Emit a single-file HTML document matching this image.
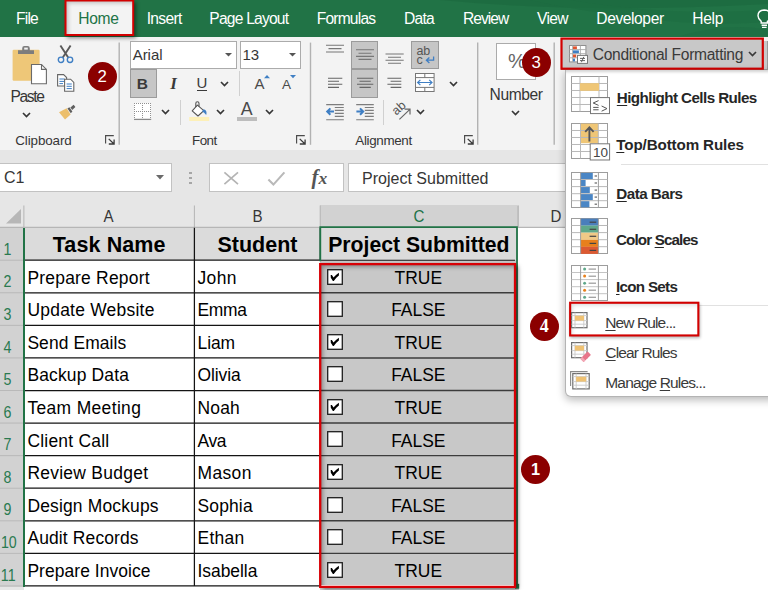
<!DOCTYPE html>
<html><head><meta charset="utf-8"><title>Excel Conditional Formatting</title>
<style>
html,body{margin:0;padding:0;}
body{width:768px;height:590px;position:relative;overflow:hidden;background:#fff;font-family:"Liberation Sans",sans-serif;}
.a{position:absolute;box-sizing:border-box;}
.t{position:absolute;white-space:nowrap;line-height:1;}
.t u{text-decoration-thickness:1.2px;text-underline-offset:2px;}
svg{overflow:visible;}
</style></head><body>
<div class="a " style="left:0.00px;top:0.00px;width:768.00px;height:36.60px;background:#217346;"></div>
<div class="a " style="left:0.00px;top:36.50px;width:768.00px;height:113.70px;background:#f3f3f3;"></div>
<div class="a " style="left:0.00px;top:150.20px;width:768.00px;height:55.00px;background:#e6e6e6;"></div>
<svg class="a" style="left:380px;top:0" width="388" height="36" viewBox="0 0 388 36"><path d="M60 0 Q200 14 388 4 V0 Z" fill="#1d6a40" opacity=".8"/><path d="M150 0 Q290 30 388 22 V10 Q280 16 190 0 Z" fill="#1e6d42" opacity=".7"/><path d="M300 36 Q350 22 388 30 V36 Z" fill="#1e6d42" opacity=".6"/></svg>
<svg class="a" style="left:757.00px;top:9.00px" width="14" height="20" viewBox="0 0 14 20"><path d="M4.2 14 V12.4 Q1 9.8 1 6.8 Q1 1.2 7.4 1 Q13.6 1.2 13.6 6.8 Q13.6 9.8 10.4 12.4 V14 Z M4.6 16.2 H10 M5 18.4 H9.6" fill="none" stroke="#fff" stroke-width="1.4"/></svg>
<div class="a " style="left:65.00px;top:0.00px;width:69.00px;height:36.00px;background:#f3f3f3;box-shadow:2px 2px 4px rgba(0,0,0,.45), inset 3px 3px 4px rgba(0,0,0,.22);"></div>
<svg class="a" style="left:0;top:0" width="768" height="40" fill="none"><rect x="65.5" y="0.5" width="67.7" height="34.5" stroke="#d20000" stroke-width="2"/></svg>
<span class="t" style="left:16.00px;top:10.60px;font-size:15.60px;color:#fff;letter-spacing:-0.784px;">File</span>
<span class="t" style="left:146.70px;top:10.60px;font-size:15.60px;color:#fff;letter-spacing:-0.669px;">Insert</span>
<span class="t" style="left:209.30px;top:10.60px;font-size:15.60px;color:#fff;letter-spacing:-0.782px;">Page Layout</span>
<span class="t" style="left:316.70px;top:10.60px;font-size:15.60px;color:#fff;letter-spacing:-0.802px;">Formulas</span>
<span class="t" style="left:404.00px;top:10.60px;font-size:15.60px;color:#fff;letter-spacing:-0.738px;">Data</span>
<span class="t" style="left:463.00px;top:10.60px;font-size:15.60px;color:#fff;letter-spacing:-0.975px;">Review</span>
<span class="t" style="left:537.00px;top:10.60px;font-size:15.60px;color:#fff;letter-spacing:-0.633px;">View</span>
<span class="t" style="left:596.30px;top:10.60px;font-size:15.60px;color:#fff;letter-spacing:-0.412px;">Developer</span>
<span class="t" style="left:692.30px;top:10.60px;font-size:15.60px;color:#fff;letter-spacing:-0.346px;">Help</span>
<span class="t" style="left:78.30px;top:10.50px;font-size:15.60px;color:#217346;letter-spacing:-0.304px;">Home</span>
<div class="a " style="left:0.00px;top:205.00px;width:768.00px;height:22.50px;background:#e6e6e6;"></div>
<div class="a " style="left:320.30px;top:205.00px;width:196.30px;height:22.50px;background:#d2d2d2;"></div>
<div class="a " style="left:0.00px;top:227.50px;width:24.00px;height:362.50px;background:#d2d2d2;"></div>
<div class="a " style="left:0.00px;top:586.95px;width:24.00px;height:10.00px;background:#e6e6e6;"></div>
<div class="a " style="left:24.00px;top:227.50px;width:296.30px;height:32.70px;background:#dbdbdb;"></div>
<div class="a " style="left:320.30px;top:227.50px;width:197.70px;height:32.70px;background:#dbdbdb;"></div>
<div class="a " style="left:320.30px;top:260.20px;width:197.70px;height:324.40px;background:#c8c8c8;"></div>
<div class="a " style="left:320.30px;top:588.00px;width:198.70px;height:2.00px;background:#d0d0d0;"></div>
<svg class="a" style="left:0;top:0" width="768" height="590" fill="none"><path d="M23.90 205.50 V227.00" stroke="#b4b4b4" stroke-width="1"/><path d="M194.40 205.50 V227.00" stroke="#b4b4b4" stroke-width="1"/><path d="M320.20 205.50 V227.00" stroke="#b4b4b4" stroke-width="1"/><path d="M517.90 205.50 V227.00" stroke="#b4b4b4" stroke-width="1"/><path d="M0.00 227.30 H320.30" stroke="#ababab" stroke-width="1"/><path d="M518.00 227.30 H768.00" stroke="#ababab" stroke-width="1"/><path d="M518.20 205.50 V227.00" stroke="#b4b4b4" stroke-width="1"/><path d="M0.00 260.20 H23.00" stroke="#b9b9b9" stroke-width="1"/><path d="M0.00 292.77 H23.00" stroke="#b9b9b9" stroke-width="1"/><path d="M0.00 325.35 H23.00" stroke="#b9b9b9" stroke-width="1"/><path d="M0.00 357.93 H23.00" stroke="#b9b9b9" stroke-width="1"/><path d="M0.00 390.50 H23.00" stroke="#b9b9b9" stroke-width="1"/><path d="M0.00 423.07 H23.00" stroke="#b9b9b9" stroke-width="1"/><path d="M0.00 455.65 H23.00" stroke="#b9b9b9" stroke-width="1"/><path d="M0.00 488.23 H23.00" stroke="#b9b9b9" stroke-width="1"/><path d="M0.00 520.80 H23.00" stroke="#b9b9b9" stroke-width="1"/><path d="M0.00 553.38 H23.00" stroke="#b9b9b9" stroke-width="1"/><path d="M0.00 585.95 H23.00" stroke="#b9b9b9" stroke-width="1"/><path d="M24.00 260.20 H320.30" stroke="#141414" stroke-width="1.25"/><path d="M320.30 260.20 H515.00" stroke="#1a1a1a" stroke-width="1.1"/><path d="M24.00 292.77 H320.30" stroke="#141414" stroke-width="1.25"/><path d="M320.30 292.77 H515.00" stroke="#3c3c3c" stroke-width="1.4"/><path d="M24.00 325.35 H320.30" stroke="#141414" stroke-width="1.25"/><path d="M320.30 325.35 H515.00" stroke="#3c3c3c" stroke-width="1.4"/><path d="M24.00 357.93 H320.30" stroke="#141414" stroke-width="1.25"/><path d="M320.30 357.93 H515.00" stroke="#3c3c3c" stroke-width="1.4"/><path d="M24.00 390.50 H320.30" stroke="#141414" stroke-width="1.25"/><path d="M320.30 390.50 H515.00" stroke="#3c3c3c" stroke-width="1.4"/><path d="M24.00 423.07 H320.30" stroke="#141414" stroke-width="1.25"/><path d="M320.30 423.07 H515.00" stroke="#3c3c3c" stroke-width="1.4"/><path d="M24.00 455.65 H320.30" stroke="#141414" stroke-width="1.25"/><path d="M320.30 455.65 H515.00" stroke="#3c3c3c" stroke-width="1.4"/><path d="M24.00 488.23 H320.30" stroke="#141414" stroke-width="1.25"/><path d="M320.30 488.23 H515.00" stroke="#3c3c3c" stroke-width="1.4"/><path d="M24.00 520.80 H320.30" stroke="#141414" stroke-width="1.25"/><path d="M320.30 520.80 H515.00" stroke="#3c3c3c" stroke-width="1.4"/><path d="M24.00 553.38 H320.30" stroke="#141414" stroke-width="1.25"/><path d="M320.30 553.38 H515.00" stroke="#3c3c3c" stroke-width="1.4"/><path d="M24.00 585.95 H320.30" stroke="#141414" stroke-width="1.25"/><path d="M194.40 227.80 V585.95" stroke="#141414" stroke-width="1.25"/><path d="M320.30 227.80 V260.20" stroke="#141414" stroke-width="1.25"/></svg>
<svg class="a" style="left:6.00px;top:209.00px" width="16" height="15" viewBox="0 0 16 15"><path d="M15 0 L15 14.5 L0 14.5 Z" fill="#b7b7b7"/></svg>
<span class="t" style="left:103.40px;top:209.30px;font-size:16.80px;color:#363636;transform:scaleX(.9);transform-origin:50% 50%;">A</span>
<span class="t" style="left:251.90px;top:209.30px;font-size:16.80px;color:#363636;transform:scaleX(.9);transform-origin:50% 50%;">B</span>
<span class="t" style="left:412.93px;top:209.30px;font-size:16.80px;color:#217346;transform:scaleX(.9);transform-origin:50% 50%;">C</span>
<span class="t" style="left:549.93px;top:209.30px;font-size:16.80px;color:#363636;transform:scaleX(.9);transform-origin:50% 50%;">D</span>
<div class="a " style="left:22.90px;top:227.50px;width:1.80px;height:359.45px;background:#217346;"></div>
<span class="t" style="left:3.01px;top:241.82px;font-size:15.80px;color:#2a7a50;transform:scaleX(.9);transform-origin:50% 50%;">1</span>
<span class="t" style="left:3.01px;top:274.40px;font-size:15.80px;color:#2a7a50;transform:scaleX(.9);transform-origin:50% 50%;">2</span>
<span class="t" style="left:3.01px;top:306.97px;font-size:15.80px;color:#2a7a50;transform:scaleX(.9);transform-origin:50% 50%;">3</span>
<span class="t" style="left:3.01px;top:339.55px;font-size:15.80px;color:#2a7a50;transform:scaleX(.9);transform-origin:50% 50%;">4</span>
<span class="t" style="left:3.01px;top:372.12px;font-size:15.80px;color:#2a7a50;transform:scaleX(.9);transform-origin:50% 50%;">5</span>
<span class="t" style="left:3.01px;top:404.70px;font-size:15.80px;color:#2a7a50;transform:scaleX(.9);transform-origin:50% 50%;">6</span>
<span class="t" style="left:3.01px;top:437.27px;font-size:15.80px;color:#2a7a50;transform:scaleX(.9);transform-origin:50% 50%;">7</span>
<span class="t" style="left:3.01px;top:469.85px;font-size:15.80px;color:#2a7a50;transform:scaleX(.9);transform-origin:50% 50%;">8</span>
<span class="t" style="left:3.01px;top:502.43px;font-size:15.80px;color:#2a7a50;transform:scaleX(.9);transform-origin:50% 50%;">9</span>
<span class="t" style="left:-0.39px;top:535.00px;font-size:15.80px;color:#2a7a50;transform:scaleX(.9);transform-origin:50% 50%;">10</span>
<span class="t" style="left:0.20px;top:567.58px;font-size:15.80px;color:#2a7a50;transform:scaleX(.9);transform-origin:50% 50%;">11</span>
<span class="t" style="left:52.70px;top:235.20px;font-size:21.50px;color:#000;letter-spacing:0.117px;font-weight:bold;">Task Name</span>
<span class="t" style="left:217.49px;top:235.20px;font-size:21.50px;color:#000;font-weight:bold;">Student</span>
<span class="t" style="left:328.20px;top:234.10px;font-size:21.20px;color:#000;font-weight:bold;">Project Submitted</span>
<span class="t" style="left:27.40px;top:269.70px;font-size:17.45px;color:#000;letter-spacing:0.230px;">Prepare Report</span>
<span class="t" style="left:197.50px;top:269.70px;font-size:17.45px;color:#000;letter-spacing:0.400px;">John</span>
<span class="t" style="left:394.55px;top:269.70px;font-size:17.45px;color:#000;">TRUE</span>
<svg class="a" style="left:327.00px;top:268.50px" width="16" height="16" viewBox="0 0 16 16"><rect x="0.7" y="0.7" width="14.6" height="14.6" fill="#fff" stroke="#1e1e1e" stroke-width="1.3"/><path d="M3.7 6 L4.9 5.9 L6.5 8.6 Q9 5.6 11.9 3.7 L11.9 6.6 Q9 8.8 6.8 12 L5.9 12 L3.8 8.8 Z" fill="#000"/></svg>
<span class="t" style="left:27.40px;top:302.27px;font-size:17.45px;color:#000;letter-spacing:0.250px;">Update Website</span>
<span class="t" style="left:197.50px;top:302.27px;font-size:17.45px;color:#000;letter-spacing:-0.270px;">Emma</span>
<span class="t" style="left:391.14px;top:302.27px;font-size:17.45px;color:#000;">FALSE</span>
<svg class="a" style="left:327.00px;top:301.07px" width="16" height="16" viewBox="0 0 16 16"><rect x="0.7" y="0.7" width="14.6" height="14.6" fill="#fff" stroke="#1e1e1e" stroke-width="1.3"/></svg>
<span class="t" style="left:27.40px;top:334.85px;font-size:17.45px;color:#000;letter-spacing:0.100px;">Send Emails</span>
<span class="t" style="left:197.50px;top:334.85px;font-size:17.45px;color:#000;letter-spacing:-0.070px;">Liam</span>
<span class="t" style="left:394.55px;top:334.85px;font-size:17.45px;color:#000;">TRUE</span>
<svg class="a" style="left:327.00px;top:333.65px" width="16" height="16" viewBox="0 0 16 16"><rect x="0.7" y="0.7" width="14.6" height="14.6" fill="#fff" stroke="#1e1e1e" stroke-width="1.3"/><path d="M3.7 6 L4.9 5.9 L6.5 8.6 Q9 5.6 11.9 3.7 L11.9 6.6 Q9 8.8 6.8 12 L5.9 12 L3.8 8.8 Z" fill="#000"/></svg>
<span class="t" style="left:27.40px;top:367.43px;font-size:17.45px;color:#000;letter-spacing:0.170px;">Backup Data</span>
<span class="t" style="left:197.50px;top:367.43px;font-size:17.45px;color:#000;letter-spacing:-0.100px;">Olivia</span>
<span class="t" style="left:391.14px;top:367.43px;font-size:17.45px;color:#000;">FALSE</span>
<svg class="a" style="left:327.00px;top:366.23px" width="16" height="16" viewBox="0 0 16 16"><rect x="0.7" y="0.7" width="14.6" height="14.6" fill="#fff" stroke="#1e1e1e" stroke-width="1.3"/></svg>
<span class="t" style="left:27.40px;top:400.00px;font-size:17.45px;color:#000;letter-spacing:0.360px;">Team Meeting</span>
<span class="t" style="left:197.50px;top:400.00px;font-size:17.45px;color:#000;letter-spacing:0.170px;">Noah</span>
<span class="t" style="left:394.55px;top:400.00px;font-size:17.45px;color:#000;">TRUE</span>
<svg class="a" style="left:327.00px;top:398.80px" width="16" height="16" viewBox="0 0 16 16"><rect x="0.7" y="0.7" width="14.6" height="14.6" fill="#fff" stroke="#1e1e1e" stroke-width="1.3"/><path d="M3.7 6 L4.9 5.9 L6.5 8.6 Q9 5.6 11.9 3.7 L11.9 6.6 Q9 8.8 6.8 12 L5.9 12 L3.8 8.8 Z" fill="#000"/></svg>
<span class="t" style="left:27.40px;top:432.57px;font-size:17.45px;color:#000;letter-spacing:0.230px;">Client Call</span>
<span class="t" style="left:197.50px;top:432.57px;font-size:17.45px;color:#000;letter-spacing:-0.400px;">Ava</span>
<span class="t" style="left:391.14px;top:432.57px;font-size:17.45px;color:#000;">FALSE</span>
<svg class="a" style="left:327.00px;top:431.38px" width="16" height="16" viewBox="0 0 16 16"><rect x="0.7" y="0.7" width="14.6" height="14.6" fill="#fff" stroke="#1e1e1e" stroke-width="1.3"/></svg>
<span class="t" style="left:27.40px;top:465.15px;font-size:17.45px;color:#000;letter-spacing:0.275px;">Review Budget</span>
<span class="t" style="left:197.50px;top:465.15px;font-size:17.45px;color:#000;letter-spacing:0.375px;">Mason</span>
<span class="t" style="left:394.55px;top:465.15px;font-size:17.45px;color:#000;">TRUE</span>
<svg class="a" style="left:327.00px;top:463.95px" width="16" height="16" viewBox="0 0 16 16"><rect x="0.7" y="0.7" width="14.6" height="14.6" fill="#fff" stroke="#1e1e1e" stroke-width="1.3"/><path d="M3.7 6 L4.9 5.9 L6.5 8.6 Q9 5.6 11.9 3.7 L11.9 6.6 Q9 8.8 6.8 12 L5.9 12 L3.8 8.8 Z" fill="#000"/></svg>
<span class="t" style="left:27.40px;top:497.73px;font-size:17.45px;color:#000;letter-spacing:0.177px;">Design Mockups</span>
<span class="t" style="left:197.50px;top:497.73px;font-size:17.45px;color:#000;letter-spacing:0.160px;">Sophia</span>
<span class="t" style="left:391.14px;top:497.73px;font-size:17.45px;color:#000;">FALSE</span>
<svg class="a" style="left:327.00px;top:496.53px" width="16" height="16" viewBox="0 0 16 16"><rect x="0.7" y="0.7" width="14.6" height="14.6" fill="#fff" stroke="#1e1e1e" stroke-width="1.3"/></svg>
<span class="t" style="left:27.40px;top:530.30px;font-size:17.45px;color:#000;letter-spacing:0.140px;">Audit Records</span>
<span class="t" style="left:197.50px;top:530.30px;font-size:17.45px;color:#000;letter-spacing:0.300px;">Ethan</span>
<span class="t" style="left:391.14px;top:530.30px;font-size:17.45px;color:#000;">FALSE</span>
<svg class="a" style="left:327.00px;top:529.10px" width="16" height="16" viewBox="0 0 16 16"><rect x="0.7" y="0.7" width="14.6" height="14.6" fill="#fff" stroke="#1e1e1e" stroke-width="1.3"/></svg>
<span class="t" style="left:27.40px;top:562.88px;font-size:17.45px;color:#000;letter-spacing:0.070px;">Prepare Invoice</span>
<span class="t" style="left:197.50px;top:562.88px;font-size:17.45px;color:#000;letter-spacing:-0.030px;">Isabella</span>
<span class="t" style="left:394.55px;top:562.88px;font-size:17.45px;color:#000;">TRUE</span>
<svg class="a" style="left:327.00px;top:561.67px" width="16" height="16" viewBox="0 0 16 16"><rect x="0.7" y="0.7" width="14.6" height="14.6" fill="#fff" stroke="#1e1e1e" stroke-width="1.3"/><path d="M3.7 6 L4.9 5.9 L6.5 8.6 Q9 5.6 11.9 3.7 L11.9 6.6 Q9 8.8 6.8 12 L5.9 12 L3.8 8.8 Z" fill="#000"/></svg>
<svg class="a" style="left:0;top:0" width="768" height="590" fill="none"><path d="M320.30 261.20 V227.2 H517.00 V584" stroke="#217346" stroke-width="1.8"/><rect x="515" y="583.8" width="4.2" height="4.9" fill="#217346" stroke="none"/></svg>
<div class="a " style="left:320.20px;top:264.00px;width:195.00px;height:322.60px;box-shadow:inset 3px 3px 4px rgba(0,0,0,.33), 2.5px 2px 4px rgba(0,0,0,.5);"></div>
<div class="a " style="left:321.30px;top:584.50px;width:194.70px;height:1.60px;background:#fff;"></div>
<svg class="a" style="left:0;top:0" width="768" height="590" fill="none"><rect x="320.2" y="264.1" width="194.8" height="322.8" stroke="#d80005" stroke-width="2.3"/></svg>
<svg class="a" style="left:0;top:0" width="768" height="150"><path d="M119.20 42.6 V144.8" stroke="#b2b2b2" stroke-width="1.4"/></svg>
<svg class="a" style="left:0;top:0" width="768" height="150"><path d="M310.50 42.6 V144.8" stroke="#b2b2b2" stroke-width="1.4"/></svg>
<svg class="a" style="left:0;top:0" width="768" height="150"><path d="M477.70 42.6 V144.8" stroke="#b2b2b2" stroke-width="1.4"/></svg>
<svg class="a" style="left:0;top:0" width="768" height="150"><path d="M554.20 42.6 V144.8" stroke="#b2b2b2" stroke-width="1.4"/></svg>
<span class="t" style="left:15.30px;top:133.90px;font-size:13.40px;color:#363636;letter-spacing:-0.118px;">Clipboard</span>
<span class="t" style="left:192.00px;top:133.90px;font-size:13.40px;color:#363636;letter-spacing:-0.553px;">Font</span>
<span class="t" style="left:355.30px;top:133.90px;font-size:13.40px;color:#363636;letter-spacing:-0.332px;">Alignment</span>
<svg class="a" style="left:104.80px;top:135.20px" width="10" height="10" viewBox="0 0 10 10"><path d="M0.6 8.6 V0.6 H8.8" fill="none" stroke="#4a4a4a" stroke-width="1.15"/><path d="M3.7 3.9 L8.8 8.8 M9.1 4.4 V9 H3.8" fill="none" stroke="#3a3a3a" stroke-width="1.3"/></svg>
<svg class="a" style="left:296.40px;top:135.20px" width="10" height="10" viewBox="0 0 10 10"><path d="M0.6 8.6 V0.6 H8.8" fill="none" stroke="#4a4a4a" stroke-width="1.15"/><path d="M3.7 3.9 L8.8 8.8 M9.1 4.4 V9 H3.8" fill="none" stroke="#3a3a3a" stroke-width="1.3"/></svg>
<svg class="a" style="left:463.50px;top:135.20px" width="10" height="10" viewBox="0 0 10 10"><path d="M0.6 8.6 V0.6 H8.8" fill="none" stroke="#4a4a4a" stroke-width="1.15"/><path d="M3.7 3.9 L8.8 8.8 M9.1 4.4 V9 H3.8" fill="none" stroke="#3a3a3a" stroke-width="1.3"/></svg>
<svg class="a" style="left:12.00px;top:45.00px" width="36" height="40" viewBox="0 0 36 40"><rect x="0.6" y="4.8" width="27" height="31" rx="1.2" fill="#eec778"/><path d="M6 9 V5.2 H10.2 V3.2 Q10.2 1 12.4 1 H15.6 Q17.8 1 17.8 3.2 V5.2 H22 V9 Z" fill="#7d7d7d"/><rect x="12.2" y="2.6" width="3.6" height="2" fill="#f3f3f3"/><path d="M19.5 19.5 H29.5 L34.4 24.4 V38.8 H19.5 Z" fill="#fff" stroke="#6a6a6a" stroke-width="1.1"/><path d="M29.5 19.5 V24.4 H34.4" fill="none" stroke="#6a6a6a" stroke-width="1.1"/></svg>
<span class="t" style="left:10.60px;top:88.60px;font-size:15.60px;color:#363636;letter-spacing:-1.398px;">Paste</span>
<svg class="a" style="left:21.50px;top:112.20px" width="9" height="5.6" viewBox="0 0 9 5.6"><path d="M1 1 L4.5 4.6 L8 1" fill="none" stroke="#363636" stroke-width="1.65"/></svg>
<svg class="a" style="left:57.00px;top:45.00px" width="17" height="19" viewBox="0 0 17 19"><path d="M3.4 0.6 L11.2 12.4 M13.6 0.6 L5.8 12.4" stroke="#5a5a5a" stroke-width="1.9" fill="none"/><circle cx="4" cy="14.8" r="2.7" fill="none" stroke="#3f7fc4" stroke-width="1.4"/><circle cx="13" cy="14.8" r="2.7" fill="none" stroke="#3f7fc4" stroke-width="1.4"/></svg>
<svg class="a" style="left:57.00px;top:74.00px" width="18" height="18" viewBox="0 0 18 18"><path d="M0.6 0.6 H6.6 L9.6 3.6 V12 H0.6 Z" fill="#fff" stroke="#666" stroke-width="1.1"/><path d="M2.4 5 H7.6 M2.4 7.4 H7.6 M2.4 9.6 H6" stroke="#3f7fc4" stroke-width="1"/><path d="M7.6 5.2 H13.6 L16.8 8.4 V17.2 H7.6 Z" fill="#fff" stroke="#666" stroke-width="1.1"/><path d="M9.6 10 H14.8 M9.6 12.3 H14.8 M9.6 14.6 H14.8" stroke="#3f7fc4" stroke-width="1"/></svg>
<svg class="a" style="left:57.50px;top:103.50px" width="18" height="16" viewBox="0 0 18 16"><path d="M1 8.2 L8.6 4.2 L12.6 10.4 L7 15.4 Z" fill="#ecbf6c"/><path d="M9.4 4.6 L11.4 3.2 L14.4 7.4 L12.8 9.2 Z" fill="#5f5f5f"/><path d="M12.4 3.6 L15.6 0.8 L17.4 3 L14.2 6 Z" fill="#5f5f5f"/></svg>
<div class="a " style="left:87.70px;top:62.10px;width:29.00px;height:29.00px;background:#8b0000;border-radius:50%;"></div>
<span class="t" style="left:97.53px;top:69.20px;font-size:16.80px;color:#fff;">2</span>
<div class="a " style="left:129.70px;top:40.50px;width:107.50px;height:28.30px;background:#fff;border:1px solid #ababab;"></div>
<span class="t" style="left:132.70px;top:47.00px;font-size:15.00px;color:#363636;letter-spacing:-0.042px;">Arial</span>
<svg class="a" style="left:224.70px;top:53.20px" width="7" height="4" viewBox="0 0 7 4"><path d="M0 0 H7 L3.5 3.6 Z" fill="#555"/></svg>
<div class="a " style="left:239.50px;top:40.50px;width:61.70px;height:28.30px;background:#fff;border:1px solid #ababab;"></div>
<span class="t" style="left:242.50px;top:47.00px;font-size:15.00px;color:#363636;">13</span>
<svg class="a" style="left:288.90px;top:53.20px" width="7" height="4" viewBox="0 0 7 4"><path d="M0 0 H7 L3.5 3.6 Z" fill="#555"/></svg>
<div class="a " style="left:129.50px;top:69.30px;width:27.30px;height:28.40px;background:#c6c6c6;border:1px solid #9b9b9b;"></div>
<span class="t" style="left:136.70px;top:75.50px;font-size:15.50px;color:#3a3a3a;font-weight:bold;">B</span>
<span class="t" style="left:170.29px;top:74.60px;font-size:17.00px;color:#3a3a3a;font-weight:bold;font-style:italic;font-family:'Liberation Serif',serif;">I</span>
<span class="t" style="left:196.58px;top:75.30px;font-size:15.00px;color:#3a3a3a;">U</span>
<div class="a " style="left:197.00px;top:90.00px;width:10.20px;height:1.20px;background:#3a3a3a;"></div>
<svg class="a" style="left:219.80px;top:80.80px" width="9" height="5.6" viewBox="0 0 9 5.6"><path d="M1 1 L4.5 4.6 L8 1" fill="none" stroke="#363636" stroke-width="1.65"/></svg>
<div class="a " style="left:239.20px;top:70.50px;width:1.00px;height:25.50px;background:#d0d0d0;"></div>
<span class="t" style="left:254.50px;top:76.00px;font-size:15.00px;color:#4a4a4a;">A</span>
<svg class="a" style="left:264.30px;top:74.60px" width="6" height="3.2" viewBox="0 0 6 3.2"><path d="M0 3.2 L3 0 L6 3.2 Z" fill="#3f7fc4"/></svg>
<span class="t" style="left:282.10px;top:78.00px;font-size:13.50px;color:#4a4a4a;">A</span>
<svg class="a" style="left:289.60px;top:75.00px" width="6" height="3.2" viewBox="0 0 6 3.2"><path d="M0 0 L3 3.2 L6 0 Z" fill="#3f7fc4"/></svg>
<svg class="a" style="left:134.00px;top:103.00px" width="18" height="18" viewBox="0 0 18 18"><rect x="0" y="0" width="17" height="16" fill="#fff"/><g shape-rendering="crispEdges" stroke="#909090" stroke-width="1" stroke-dasharray="1 1" fill="none"><path d="M0 0.5 H17 M0 8.5 H17 M0.5 0 V16 M8.5 0 V16 M16.5 0 V16"/></g><path d="M0 16.4 H17.2" stroke="#8a8a8a" stroke-width="1.3"/></svg>
<svg class="a" style="left:160.80px;top:109.20px" width="9" height="5.6" viewBox="0 0 9 5.6"><path d="M1 1 L4.5 4.6 L8 1" fill="none" stroke="#363636" stroke-width="1.65"/></svg>
<div class="a " style="left:180.00px;top:99.50px;width:1.00px;height:25.50px;background:#d0d0d0;"></div>
<svg class="a" style="left:188.50px;top:101.00px" width="21" height="21" viewBox="0 0 21 21"><rect x="0.2" y="16" width="20" height="4" fill="#fdf0b8"/><path d="M8.4 4.2 L14.8 9.6 L9 15 L3.2 9.8 Z" fill="#fff" stroke="#555" stroke-width="1.1" stroke-linejoin="round"/><path d="M6.8 6 V2.6 Q6.8 0.8 8.4 0.8 Q10 0.8 10 2.6 V5.4" fill="none" stroke="#555" stroke-width="1.1"/><path d="M14.6 8.2 Q18.6 9.2 17.2 14 Q15.2 11 13 10.4 Z" fill="#3f7fc4"/></svg>
<svg class="a" style="left:216.20px;top:109.20px" width="9" height="5.6" viewBox="0 0 9 5.6"><path d="M1 1 L4.5 4.6 L8 1" fill="none" stroke="#363636" stroke-width="1.65"/></svg>
<span class="t" style="left:240.86px;top:101.30px;font-size:17.80px;color:#4a4a4a;">A</span>
<div class="a " style="left:237.20px;top:117.00px;width:19.80px;height:4.00px;background:#bdbdbd;"></div>
<svg class="a" style="left:264.80px;top:109.20px" width="9" height="5.6" viewBox="0 0 9 5.6"><path d="M1 1 L4.5 4.6 L8 1" fill="none" stroke="#363636" stroke-width="1.65"/></svg>
<div class="a " style="left:351.20px;top:40.50px;width:27.30px;height:28.50px;background:#c6c6c6;border:1px solid #9b9b9b;"></div>
<div class="a " style="left:351.20px;top:69.00px;width:27.30px;height:28.60px;background:#c6c6c6;border:1px solid #9b9b9b;"></div>
<div class="a " style="left:411.20px;top:40.50px;width:28.00px;height:28.30px;background:#c6c6c6;border:1px solid #9b9b9b;"></div>
<svg class="a" style="left:0;top:0" width="768" height="160"><path d="M326.0 45.2 H344.0 M328.5 48.6 H341.5 M326.0 52.0 H344.0 " stroke="#777" stroke-width="1.1" fill="none"/></svg>
<svg class="a" style="left:0;top:0" width="768" height="160"><path d="M356.0 49.8 H374.0 M358.5 53.2 H371.5 M356.0 56.4 H374.0 M358.5 59.4 H371.5 " stroke="#777" stroke-width="1.1" fill="none"/></svg>
<svg class="a" style="left:0;top:0" width="768" height="160"><path d="M385.5 54.0 H403.7 M388.0 57.2 H401.0 M385.5 60.2 H403.7 M388.0 63.2 H401.0 " stroke="#777" stroke-width="1.1" fill="none"/></svg>
<svg class="a" style="left:0;top:0" width="768" height="160"><path d="M328.0 78.3 H342.3 M328.0 81.3 H339.0 M328.0 84.3 H342.3 M328.0 87.4 H339.0 " stroke="#666" stroke-width="1.1" fill="none"/></svg>
<svg class="a" style="left:0;top:0" width="768" height="160"><path d="M357.0 78.3 H373.3 M359.5 81.3 H370.8 M357.0 84.3 H373.3 M359.5 87.4 H370.8 " stroke="#666" stroke-width="1.1" fill="none"/></svg>
<svg class="a" style="left:0;top:0" width="768" height="160"><path d="M387.4 78.3 H401.3 M390.6 81.3 H401.3 M387.4 84.3 H401.3 M390.6 87.4 H401.3 " stroke="#666" stroke-width="1.1" fill="none"/></svg>
<span class="t" style="left:416.40px;top:44.60px;font-size:12.50px;color:#555;">ab</span>
<span class="t" style="left:416.60px;top:53.60px;font-size:12.50px;color:#555;">c</span>
<svg class="a" style="left:424.50px;top:56.00px" width="10" height="8" viewBox="0 0 10 8"><path d="M8.6 0.4 V4.2 H1.8 M4.4 1.4 L1.4 4.2 L4.4 7" fill="none" stroke="#3f7fc4" stroke-width="1.3"/></svg>
<svg class="a" style="left:415.00px;top:73.00px" width="20" height="19" viewBox="0 0 20 19"><rect x="0.5" y="0.5" width="18.6" height="18" fill="#fff" stroke="#777" stroke-width="1"/><path d="M0.5 4.6 H19 M0.5 14.4 H19 M9.8 0.5 V4.6 M9.8 14.4 V18.5" stroke="#777" stroke-width="1" fill="none"/><path d="M2.6 9.5 H17 M5.4 6.9 L2.6 9.5 L5.4 12.1 M14.2 6.9 L17 9.5 L14.2 12.1" stroke="#3f7fc4" stroke-width="1.2" fill="none"/></svg>
<svg class="a" style="left:448.50px;top:80.80px" width="9" height="5.6" viewBox="0 0 9 5.6"><path d="M1 1 L4.5 4.6 L8 1" fill="none" stroke="#363636" stroke-width="1.65"/></svg>
<svg class="a" style="left:326.10px;top:103.50px" width="18.4" height="17" viewBox="0 0 18.4 17"><path d="M0.2 0.6 H17.8 M8.8 3.5 H17.8 M8.8 6.4 H17.8 M8.8 9.4 H17.8 M8.8 12.4 H17.8 M0.2 15.8 H17.8" stroke="#7d7d7d" stroke-width="1.1" fill="none"/><path d="M8 7.6 H1.6 M4.4 4.4 L1.2 7.6 L4.4 10.8" stroke="#3f7fc4" stroke-width="2" fill="none"/></svg>
<svg class="a" style="left:355.90px;top:103.50px" width="18.4" height="17" viewBox="0 0 18.4 17"><path d="M0.2 0.6 H17.8 M8.8 3.5 H17.8 M8.8 6.4 H17.8 M8.8 9.4 H17.8 M8.8 12.4 H17.8 M0.2 15.8 H17.8" stroke="#7d7d7d" stroke-width="1.1" fill="none"/><path d="M0.4 7.6 H6.8 M4 4.4 L7.2 7.6 L4 10.8" stroke="#3f7fc4" stroke-width="2" fill="none"/></svg>
<div class="a " style="left:382.60px;top:99.50px;width:1.00px;height:25.50px;background:#d0d0d0;"></div>
<span class="t" style="left:391.6px;top:101.6px;font-size:12.5px;color:#555;transform:rotate(-42deg);transform-origin:50% 50%;">ab</span>
<svg class="a" style="left:396.00px;top:105.00px" width="16" height="16" viewBox="0 0 16 16"><path d="M3.4 14.4 L13.6 4.6 M8.6 4.2 L14 4.2 L14 9.6" fill="none" stroke="#666" stroke-width="1.2"/></svg>
<svg class="a" style="left:415.80px;top:109.20px" width="9" height="5.6" viewBox="0 0 9 5.6"><path d="M1 1 L4.5 4.6 L8 1" fill="none" stroke="#363636" stroke-width="1.65"/></svg>
<div class="a " style="left:496.30px;top:42.70px;width:39.60px;height:37.20px;background:#fff;border:1px solid #ababab;"></div>
<span class="t" style="left:508.11px;top:51.20px;font-size:20.00px;color:#666;">%</span>
<span class="t" style="left:489.60px;top:86.70px;font-size:15.60px;color:#363636;letter-spacing:-0.398px;">Number</span>
<svg class="a" style="left:510.70px;top:110.20px" width="9" height="5.6" viewBox="0 0 9 5.6"><path d="M1 1 L4.5 4.6 L8 1" fill="none" stroke="#363636" stroke-width="1.65"/></svg>
<div class="a " style="left:521.60px;top:48.00px;width:29.00px;height:29.00px;background:#8b0000;border-radius:50%;"></div>
<span class="t" style="left:531.43px;top:55.30px;font-size:16.80px;color:#fff;">3</span>
<div class="a " style="left:-1.00px;top:163.20px;width:173.00px;height:29.30px;background:#fff;border:1px solid #c2c2c2;"></div>
<span class="t" style="left:3.90px;top:170.30px;font-size:16.00px;color:#363636;">C1</span>
<svg class="a" style="left:156.30px;top:175.40px" width="8" height="4.5" viewBox="0 0 8 4.5"><path d="M0 0 H8 L4 4.4 Z" fill="#6a6a6a"/></svg>
<div class="a " style="left:189.00px;top:172.00px;width:3.00px;height:2.00px;background:#a6a6a6;"></div>
<div class="a " style="left:189.00px;top:177.00px;width:3.00px;height:2.00px;background:#a6a6a6;"></div>
<div class="a " style="left:189.00px;top:182.00px;width:3.00px;height:2.00px;background:#a6a6a6;"></div>
<div class="a " style="left:208.60px;top:163.20px;width:135.00px;height:29.30px;background:#fff;border:1px solid #c2c2c2;"></div>
<svg class="a" style="left:223.00px;top:171.00px" width="17" height="15" viewBox="0 0 17 15"><path d="M1.4 1.4 L15 13.2 M15 1.4 L1.4 13.2" stroke="#b4b4b4" stroke-width="1.7" fill="none"/></svg>
<svg class="a" style="left:267.00px;top:171.00px" width="19" height="16" viewBox="0 0 19 16"><path d="M1.4 8.6 L6.4 13.6 L17.4 1.4" stroke="#b9b9b9" stroke-width="2.1" fill="none"/></svg>
<span class="t" style="left:311.60px;top:166.60px;font-size:20.50px;color:#555;font-weight:bold;font-style:italic;font-family:'Liberation Serif',serif;">f</span>
<span class="t" style="left:318.60px;top:169.90px;font-size:17.50px;color:#555;font-weight:bold;font-style:italic;font-family:'Liberation Serif',serif;">x</span>
<div class="a " style="left:347.60px;top:163.20px;width:430.00px;height:29.30px;background:#fff;border:1px solid #c2c2c2;"></div>
<span class="t" style="left:362.00px;top:170.60px;font-size:16.00px;color:#363636;letter-spacing:0.013px;">Project Submitted</span>
<div class="a " style="left:561.00px;top:38.00px;width:207.00px;height:31.50px;background:#c8c8c8;border:1px solid #9a9a9a;"></div>
<div class="a " style="left:764.00px;top:38.00px;width:4.00px;height:3.00px;background:#f3f3f3;"></div>
<svg class="a" style="left:0;top:0" width="768" height="590" fill="none"><rect x="561.50" y="38.60" width="201.30" height="30.10" stroke="#d20000" stroke-width="2.2"/></svg>
<svg class="a" style="left:569.00px;top:45.00px" width="20" height="20" viewBox="0 0 20 20"><rect x="0.5" y="0.5" width="16.4" height="16.4" fill="#fff" stroke="#8f8f8f" stroke-width="1"/><path d="M0.5 4.6 H17 M0.5 8.7 H17 M0.5 12.8 H17 M3.6 0.5 V17 M11.4 0.5 V17" stroke="#a8a8a8" stroke-width="0.9" fill="none"/><rect x="4" y="1.4" width="3.9" height="2.7" fill="#e2532d"/><rect x="4" y="5.4" width="5.9" height="2.8" fill="#3f7fc4"/><rect x="4" y="9.5" width="3.2" height="2.8" fill="#e2532d"/><rect x="4" y="13.6" width="2" height="2.8" fill="#3f7fc4"/><rect x="8.5" y="10.4" width="10" height="8" fill="#fff" stroke="#777" stroke-width="1"/><path d="M11 13.4 H16 M11 15.6 H16 M14.8 11.8 L12.4 17.2" stroke="#555" stroke-width="0.9" fill="none"/></svg>
<span class="t" style="left:592.70px;top:47.40px;font-size:15.60px;color:#3a3a3a;letter-spacing:-0.293px;">Conditional Formatting</span>
<svg class="a" style="left:748.10px;top:50.80px" width="9" height="5.6" viewBox="0 0 9 5.6"><path d="M1 1 L4.5 4.6 L8 1" fill="none" stroke="#3a3a3a" stroke-width="1.65"/></svg>
<div class="a " style="left:565.00px;top:69.80px;width:215.00px;height:326.80px;background:#fff;border:1px solid #b4b4b4;border-top:none;border-radius:0 0 0 6px;box-shadow:0 3px 8px rgba(0,0,0,.28), inset 0 4px 3px -2px rgba(0,0,0,.18);"></div>
<svg class="a" style="left:571.20px;top:76.00px" width="37" height="36.4" viewBox="0 0 37 36.4"><rect x="0.5" y="0.5" width="36" height="35" fill="#fff" stroke="#9d9d9d"/><path d="M0.5 7.5 H36.5 M0.5 14.5 H36.5 M0.5 21.5 H36.5 M0.5 28.5 H36.5 M9 0.5 V35.5 M28 0.5 V35.5" stroke="#b9b9b9" stroke-width="1" fill="none"/><rect x="9" y="7.2" width="19" height="7.6" fill="#efc676"/><rect x="19.5" y="21.6" width="19" height="16" fill="#fff" stroke="#777" stroke-width="1"/><path d="M27.6 24.6 L22.2 27 L27.6 29.4 M22.2 31.4 H27.6 M22.2 33.8 H27.6" stroke="#555" stroke-width="1" fill="none"/><path d="M30.6 30 L36 32.6 L30.6 35.2" stroke="#555" stroke-width="1" fill="none"/></svg>
<span class="t" style="left:616.80px;top:90.30px;font-size:15.20px;color:#262626;letter-spacing:-0.572px;font-weight:bold;"><u>H</u>ighlight Cells Rules</span>
<svg class="a" style="left:571.20px;top:122.60px" width="37" height="36.4" viewBox="0 0 37 36.4"><rect x="0.5" y="0.5" width="36" height="35" fill="#fff" stroke="#9d9d9d"/><rect x="9.6" y="0.6" width="17.6" height="19.6" fill="#efc676"/><path d="M0.5 7.5 H36.5 M0.5 14.5 H36.5 M0.5 21.5 H36.5 M0.5 28.5 H36.5 M9.5 0.5 V35.5 M27.3 0.5 V35.5" stroke="#b9b9b9" stroke-width="1" fill="none"/><path d="M18.4 18.6 V4.4 M14.2 8.8 L18.4 4.4 L22.6 8.8" stroke="#555" stroke-width="1.9" fill="none"/><rect x="19.2" y="20.8" width="19.4" height="16.2" fill="#fff" stroke="#777" stroke-width="1"/></svg>
<span class="t" style="left:593.10px;top:146.30px;font-size:13.50px;color:#444;letter-spacing:-0.008px;">10</span>
<span class="t" style="left:616.30px;top:137.00px;font-size:15.20px;color:#262626;letter-spacing:-0.135px;font-weight:bold;"><u>T</u>op/Bottom Rules</span>
<div class="a " style="left:620.50px;top:164.00px;width:150.00px;height:1.00px;background:#e1e1e1;"></div>
<svg class="a" style="left:571.20px;top:172.20px" width="37" height="36.4" viewBox="0 0 37 36.4"><rect x="0.5" y="0.5" width="36" height="35" fill="#fff" stroke="#9d9d9d"/><rect x="9.8" y="0.9" width="12.0" height="6.2" fill="#4a86c5"/><rect x="23.6" y="3.4" width="2.4" height="1.2" fill="#666"/><rect x="9.8" y="8.0" width="4.8" height="6.2" fill="#4a86c5"/><rect x="23.6" y="10.4" width="2.4" height="1.2" fill="#666"/><rect x="9.8" y="15.0" width="9.0" height="6.2" fill="#4a86c5"/><rect x="23.6" y="17.5" width="2.4" height="1.2" fill="#666"/><rect x="9.8" y="22.0" width="12.0" height="6.2" fill="#4a86c5"/><rect x="23.6" y="24.5" width="2.4" height="1.2" fill="#666"/><rect x="9.8" y="29.1" width="8.6" height="6.2" fill="#4a86c5"/><rect x="23.6" y="31.6" width="2.4" height="1.2" fill="#666"/><path d="M0.5 7.5 H36.5 M0.5 14.6 H36.5 M0.5 21.7 H36.5 M0.5 28.7 H36.5" stroke="#b9b9b9" stroke-width="1" fill="none"/><path d="M9.6 0.5 V35.5 M27.4 0.5 V35.5" stroke="#9d9d9d" stroke-width="1" fill="none"/></svg>
<span class="t" style="left:616.30px;top:186.00px;font-size:15.20px;color:#262626;letter-spacing:-0.530px;font-weight:bold;"><u>D</u>ata Bars</span>
<svg class="a" style="left:571.20px;top:218.00px" width="37" height="36.4" viewBox="0 0 37 36.4"><rect x="0.5" y="0.5" width="36" height="35" fill="#fff" stroke="#9d9d9d"/><rect x="9.8" y="0.6" width="17.4" height="7.1" fill="#4a7ebb"/><rect x="18.6" y="3.6" width="6.6" height="1.2" fill="#444"/><rect x="9.8" y="7.6" width="17.4" height="7.1" fill="#5fa88a"/><rect x="18.6" y="10.7" width="6.6" height="1.2" fill="#444"/><rect x="9.8" y="14.7" width="17.4" height="7.1" fill="#f0c987"/><rect x="18.6" y="17.7" width="6.6" height="1.2" fill="#444"/><rect x="9.8" y="21.8" width="17.4" height="7.1" fill="#e8801c"/><rect x="18.6" y="24.8" width="6.6" height="1.2" fill="#444"/><rect x="9.8" y="28.8" width="17.4" height="7.1" fill="#dc5a32"/><rect x="18.6" y="31.8" width="6.6" height="1.2" fill="#444"/><path d="M0.5 7.5 H9.6 M27.4 7.5 H36.5 M0.5 14.6 H9.6 M27.4 14.6 H36.5 M0.5 21.7 H9.6 M27.4 21.7 H36.5 M0.5 28.7 H9.6 M27.4 28.7 H36.5" stroke="#b9b9b9" stroke-width="1" fill="none"/><path d="M9.6 0.5 V35.5 M27.4 0.5 V35.5" stroke="#9d9d9d" stroke-width="1" fill="none"/></svg>
<span class="t" style="left:616.00px;top:232.00px;font-size:15.20px;color:#262626;letter-spacing:-0.874px;font-weight:bold;">Color <u>S</u>cales</span>
<svg class="a" style="left:571.20px;top:264.50px" width="37" height="36.4" viewBox="0 0 37 36.4"><rect x="0.5" y="0.5" width="36" height="35" fill="#fff" stroke="#9d9d9d"/><circle cx="13.6" cy="4.1" r="1.5" fill="#5fa88a"/><rect x="17.6" y="3.5" width="7.4" height="1.2" fill="#999"/><circle cx="13.6" cy="11.1" r="1.5" fill="#e8801c"/><rect x="17.6" y="10.6" width="7.4" height="1.2" fill="#999"/><circle cx="13.6" cy="18.2" r="1.5" fill="#5fa88a"/><rect x="17.6" y="17.6" width="7.4" height="1.2" fill="#999"/><circle cx="13.6" cy="25.2" r="1.5" fill="#e8801c"/><rect x="17.6" y="24.6" width="7.4" height="1.2" fill="#999"/><circle cx="13.6" cy="32.3" r="1.5" fill="#5fa88a"/><rect x="17.6" y="31.7" width="7.4" height="1.2" fill="#999"/><path d="M0.5 7.5 H36.5 M0.5 14.6 H36.5 M0.5 21.7 H36.5 M0.5 28.7 H36.5" stroke="#c4c4c4" stroke-width="1" fill="none"/><path d="M9.6 0.5 V35.5 M27.4 0.5 V35.5" stroke="#9d9d9d" stroke-width="1" fill="none"/></svg>
<span class="t" style="left:616.00px;top:279.20px;font-size:15.20px;color:#262626;letter-spacing:-0.709px;font-weight:bold;"><u>I</u>con Sets</span>
<div class="a " style="left:616.00px;top:305.30px;width:160.00px;height:1.00px;background:#e1e1e1;"></div>
<div class="a " style="left:569.30px;top:301.80px;width:130.20px;height:34.60px;background:#fff;box-shadow:1px 2px 3px rgba(0,0,0,.3), inset 3px 3px 4px rgba(0,0,0,.16);"></div>
<svg class="a" style="left:0;top:0" width="768" height="590" fill="none"><rect x="570.15" y="302.75" width="128.20" height="32.70" stroke="#d20000" stroke-width="2.1"/></svg>
<svg class="a" style="left:571.30px;top:312.20px" width="17" height="17" viewBox="0 0 17 17"><rect x="0.6" y="0.6" width="15.4" height="15.1" fill="#fff" stroke="#6e6e6e" stroke-width="1.2"/><path d="M0.6 3.6 H16 M0.6 8.6 H16 M0.6 12.2 H16 M4 0.6 V15.7 M12.8 0.6 V15.7" stroke="#c9c9c9" stroke-width="0.9" fill="none"/><rect x="3.9" y="3.7" width="9.1" height="4.9" fill="#efc274"/></svg>
<span class="t" style="left:605.30px;top:314.90px;font-size:15.50px;color:#3a3a3a;letter-spacing:-0.901px;"><u>N</u>ew Rule...</span>
<svg class="a" style="left:571.30px;top:342.30px" width="22" height="22" viewBox="0 0 22 22"><rect x="0.6" y="0.6" width="15.4" height="15.1" fill="#fff" stroke="#6e6e6e" stroke-width="1.2"/><path d="M0.6 3.6 H16 M0.6 8.6 H16 M0.6 12.2 H16 M4 0.6 V15.7 M12.8 0.6 V15.7" stroke="#c9c9c9" stroke-width="0.9" fill="none"/><rect x="3.9" y="3.7" width="9.1" height="4.9" fill="#efc274"/><g transform="rotate(-45 14.6 14.8)"><rect x="9.4" y="12.4" width="10.4" height="4.8" rx="0.8" fill="#e8758a"/><rect x="9.4" y="12.4" width="2.6" height="4.8" rx="0.8" fill="#f3a8b6"/></g></svg>
<span class="t" style="left:605.30px;top:345.10px;font-size:15.50px;color:#3a3a3a;letter-spacing:-0.880px;"><u>C</u>lear Rules</span>
<svg class="a" style="left:570.20px;top:370.60px" width="21" height="19" viewBox="0 0 21 19"><path d="M0.6 15 V0.6 H17.6" fill="none" stroke="#8a8a8a" stroke-width="1.1"/><g transform="translate(2.2,2)"><rect x="0.6" y="0.6" width="16.4" height="15.3" fill="#fff" stroke="#6e6e6e" stroke-width="1.2"/><path d="M0.6 3.6 H17 M0.6 8.6 H17 M0.6 12.2 H17 M4 0.6 V15.9 M13.8 0.6 V15.9" stroke="#c9c9c9" stroke-width="0.9" fill="none"/><rect x="3.9" y="3.7" width="10.1" height="4.9" fill="#efc274"/></g></svg>
<span class="t" style="left:605.30px;top:374.50px;font-size:15.50px;color:#3a3a3a;letter-spacing:-0.845px;">Manage <u>R</u>ules...</span>
<div class="a " style="left:529.75px;top:312.25px;width:28.90px;height:28.90px;background:#8b0000;border-radius:50%;"></div>
<span class="t" style="left:539.70px;top:317.00px;font-size:18.00px;color:#fff;font-weight:bold;font-family:'Liberation Serif',serif;">4</span>
<div class="a " style="left:521.05px;top:455.35px;width:28.90px;height:28.90px;background:#8b0000;border-radius:50%;"></div>
<span class="t" style="left:530.97px;top:461.40px;font-size:16.30px;color:#fff;font-weight:bold;">1</span>
</body></html>
